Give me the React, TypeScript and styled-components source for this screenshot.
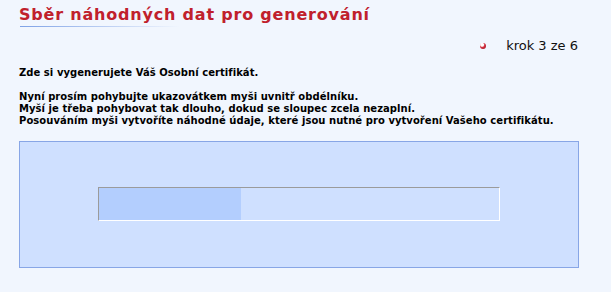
import React from "react";
import styled, { createGlobalStyle } from "styled-components";

const Global = createGlobalStyle`
  html, body { margin: 0; padding: 0; background: #f1f6fe; }
  body { font-family: Verdana, "DejaVu Sans", sans-serif; }
`;

const Page = styled.div`
  width: 611px;
  height: 292px;
  box-sizing: border-box;
  padding: 5px 32px 0 19px;
  background: #f1f6fe;
  display: flex;
  flex-direction: column;
`;

const Title = styled.h1`
  margin: 0;
  font-family: "DejaVu Sans", Verdana, sans-serif;
  font-weight: bold;
  font-size: 16px;
  line-height: 20px;
  color: #c0202c;
  letter-spacing: 0.8px;
`;

const TitleRule = styled.div`
  height: 1px;
  width: 160px;
  margin: 1px 0 0 1px;
  background: linear-gradient(to right, #7fa2e6, rgba(127, 162, 230, 0));
`;

const StepRow = styled.div`
  display: flex;
  justify-content: flex-end;
  align-items: center;
  gap: 20px;
  margin-top: 11px;
  padding-right: 1px;
  font-family: "DejaVu Sans", Verdana, sans-serif;
  font-size: 13px;
  line-height: 16px;
  color: #111;
`;

const Bullet = styled.span`
  width: 6px;
  height: 6px;
  border-radius: 50%;
  background: radial-gradient(circle at 35% 30%, #ffffff 0 25%, #d23040 45%, #9c1020 100%);
  display: inline-block;
`;

const Body = styled.div`
  margin-top: 13px;
  font-family: "DejaVu Sans", Verdana, sans-serif;
  font-weight: bold;
  font-size: 10px;
  line-height: 12px;
  letter-spacing: 0.05px;
  color: #000;
`;

const Para = styled.p`
  margin: 0 0 12px 0;
`;

const Field = styled.div`
  margin-top: 2px;
  width: 560px;
  height: 127px;
  box-sizing: border-box;
  border: 1px solid #88a6e6;
  background: #cfe0ff;
  display: flex;
  align-items: center;
  justify-content: center;
  padding-bottom: 2px;
`;

const Bar = styled.div`
  width: 402px;
  height: 34px;
  box-sizing: border-box;
  border-top: 1px solid #9b9b9b;
  border-left: 1px solid #9b9b9b;
  border-bottom: 1px solid #ffffff;
  border-right: 1px solid #ffffff;
  background: #cfe0ff;
  display: flex;
`;

const Fill = styled.div`
  height: 100%;
  background: #b3cefe;
`;

export default function App() {
  const progress = 142 / 400;
  return (
    <>
      <Global />
      <Page>
        <Title>Sběr náhodných dat pro generování</Title>
        <TitleRule />
        <StepRow>
          <Bullet />
          <span>krok 3 ze 6</span>
        </StepRow>
        <Body>
          <Para>Zde si vygenerujete Váš Osobní certifikát.</Para>
          <Para>
            Nyní prosím pohybujte ukazovátkem myši uvnitř obdélníku.
            <br />
            Myší je třeba pohybovat tak dlouho, dokud se sloupec zcela nezaplní.
            <br />
            Posouváním myši vytvoříte náhodné údaje, které jsou nutné pro vytvoření Vašeho certifikátu.
          </Para>
        </Body>
        <Field>
          <Bar>
            <Fill style={{ width: `${progress * 100}%` }} />
          </Bar>
        </Field>
      </Page>
    </>
  );
}
